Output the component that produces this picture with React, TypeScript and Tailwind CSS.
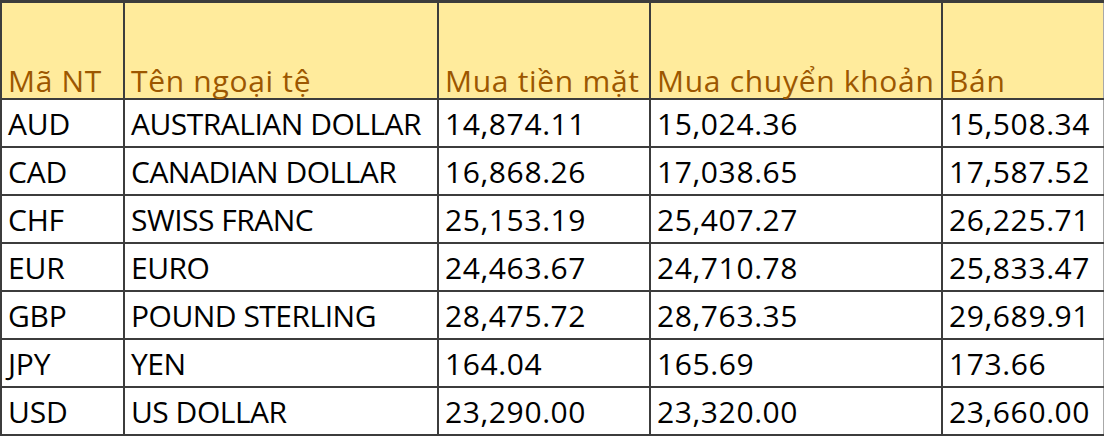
import React from "react";

const rates = [
  { code: "AUD", name: "AUSTRALIAN DOLLAR", cash: "14,874.11", transfer: "15,024.36", sell: "15,508.34" },
  { code: "CAD", name: "CANADIAN DOLLAR", cash: "16,868.26", transfer: "17,038.65", sell: "17,587.52" },
  { code: "CHF", name: "SWISS FRANC", cash: "25,153.19", transfer: "25,407.27", sell: "26,225.71" },
  { code: "EUR", name: "EURO", cash: "24,463.67", transfer: "24,710.78", sell: "25,833.47" },
  { code: "GBP", name: "POUND STERLING", cash: "28,475.72", transfer: "28,763.35", sell: "29,689.91" },
  { code: "JPY", name: "YEN", cash: "164.04", transfer: "165.69", sell: "173.66" },
  { code: "USD", name: "US DOLLAR", cash: "23,290.00", transfer: "23,320.00", sell: "23,660.00" },
];

const headers = ["Mã NT", "Tên ngoại tệ", "Mua tiền mặt", "Mua chuyển khoản", "Bán"];

// letter spacing per column, to bring the widths close to Calibri
const spacing = ["tracking-[-0.2px]", "tracking-[-0.5px]", "tracking-[0.6px]", "tracking-[0.6px]", "tracking-[0.6px]"];

function App() {
  return (
    <div className="w-[1104px] h-[436px] bg-white overflow-hidden font-['Open_Sans',sans-serif]">
      <table className="table-fixed border-collapse w-[1103px] text-[30px] leading-[30px]">
        <colgroup>
          <col className="w-[123px]" />
          <col className="w-[314px]" />
          <col className="w-[212px]" />
          <col className="w-[292px]" />
          <col className="w-[162px]" />
        </colgroup>
        <thead>
          <tr className="h-[97px] bg-[#ffeb9c]">
            {headers.map((h) => (
              <th
                key={h}
                className="border-2 border-t-[3px] border-[#3c3c3c] last:border-r-[#a8a8a8] text-left align-bottom font-normal text-[#9c5700] pl-[6px] pb-[2px] whitespace-nowrap tracking-[0.7px]"
              >
                {h}
              </th>
            ))}
          </tr>
        </thead>
        <tbody>
          {rates.map((r) => (
            <tr key={r.code} className="h-[48px]">
              {[r.code, r.name, r.cash, r.transfer, r.sell].map((v, i) => (
                <td
                  key={i}
                  className={`border-2 border-[#3c3c3c] last:border-r-[#a8a8a8] text-left align-bottom text-black pl-[6px] pb-[7px] whitespace-nowrap ${spacing[i]}`}
                >
                  {v}
                </td>
              ))}
            </tr>
          ))}
        </tbody>
      </table>
    </div>
  );
}

export default App;
